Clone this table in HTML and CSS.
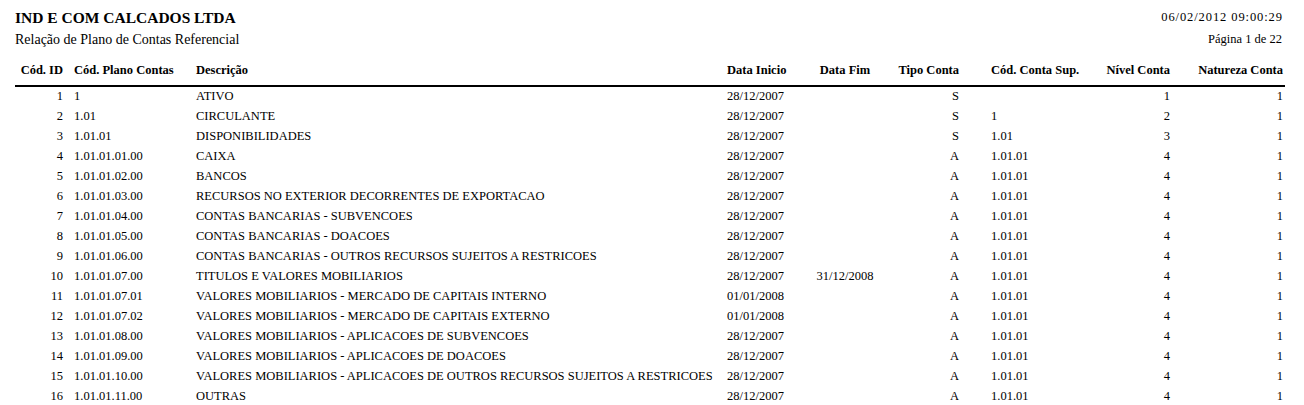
FILE: index.html
```html
<!DOCTYPE html>
<html lang="pt-BR">
<head>
<meta charset="utf-8">
<title>Relação de Plano de Contas Referencial</title>
<link rel="stylesheet" href="styles.css">
</head>
<body>
<div class="page">
  <div class="top">
    <div class="top-left">
      <div class="company">IND E COM CALCADOS LTDA</div>
      <div class="subtitle">Relação de Plano de Contas Referencial</div>
    </div>
    <div class="top-right">
      <div class="stamp">06/02/2012 09:00:29</div>
      <div class="pageno">Página 1 de 22</div>
    </div>
  </div>

  <div class="row head">
    <div class="c-id">Cód. ID</div>
    <div class="c-plano">Cód. Plano Contas</div>
    <div class="c-desc">Descrição</div>
    <div class="c-ini">Data Inicio</div>
    <div class="c-fim">Data Fim</div>
    <div class="c-tipo">Tipo Conta</div>
    <div class="c-sup">Cód. Conta Sup.</div>
    <div class="c-niv">Nível Conta</div>
    <div class="c-nat">Natureza Conta</div>
  </div>

  <div class="row"><div class="c-id">1</div><div class="c-plano">1</div><div class="c-desc">ATIVO</div><div class="c-ini">28/12/2007</div><div class="c-fim"></div><div class="c-tipo">S</div><div class="c-sup"></div><div class="c-niv">1</div><div class="c-nat">1</div></div>
  <div class="row"><div class="c-id">2</div><div class="c-plano">1.01</div><div class="c-desc">CIRCULANTE</div><div class="c-ini">28/12/2007</div><div class="c-fim"></div><div class="c-tipo">S</div><div class="c-sup">1</div><div class="c-niv">2</div><div class="c-nat">1</div></div>
  <div class="row"><div class="c-id">3</div><div class="c-plano">1.01.01</div><div class="c-desc">DISPONIBILIDADES</div><div class="c-ini">28/12/2007</div><div class="c-fim"></div><div class="c-tipo">S</div><div class="c-sup">1.01</div><div class="c-niv">3</div><div class="c-nat">1</div></div>
  <div class="row"><div class="c-id">4</div><div class="c-plano">1.01.01.01.00</div><div class="c-desc">CAIXA</div><div class="c-ini">28/12/2007</div><div class="c-fim"></div><div class="c-tipo">A</div><div class="c-sup">1.01.01</div><div class="c-niv">4</div><div class="c-nat">1</div></div>
  <div class="row"><div class="c-id">5</div><div class="c-plano">1.01.01.02.00</div><div class="c-desc">BANCOS</div><div class="c-ini">28/12/2007</div><div class="c-fim"></div><div class="c-tipo">A</div><div class="c-sup">1.01.01</div><div class="c-niv">4</div><div class="c-nat">1</div></div>
  <div class="row"><div class="c-id">6</div><div class="c-plano">1.01.01.03.00</div><div class="c-desc">RECURSOS NO EXTERIOR DECORRENTES DE EXPORTACAO</div><div class="c-ini">28/12/2007</div><div class="c-fim"></div><div class="c-tipo">A</div><div class="c-sup">1.01.01</div><div class="c-niv">4</div><div class="c-nat">1</div></div>
  <div class="row"><div class="c-id">7</div><div class="c-plano">1.01.01.04.00</div><div class="c-desc">CONTAS BANCARIAS - SUBVENCOES</div><div class="c-ini">28/12/2007</div><div class="c-fim"></div><div class="c-tipo">A</div><div class="c-sup">1.01.01</div><div class="c-niv">4</div><div class="c-nat">1</div></div>
  <div class="row"><div class="c-id">8</div><div class="c-plano">1.01.01.05.00</div><div class="c-desc">CONTAS BANCARIAS - DOACOES</div><div class="c-ini">28/12/2007</div><div class="c-fim"></div><div class="c-tipo">A</div><div class="c-sup">1.01.01</div><div class="c-niv">4</div><div class="c-nat">1</div></div>
  <div class="row"><div class="c-id">9</div><div class="c-plano">1.01.01.06.00</div><div class="c-desc">CONTAS BANCARIAS - OUTROS RECURSOS SUJEITOS A RESTRICOES</div><div class="c-ini">28/12/2007</div><div class="c-fim"></div><div class="c-tipo">A</div><div class="c-sup">1.01.01</div><div class="c-niv">4</div><div class="c-nat">1</div></div>
  <div class="row"><div class="c-id">10</div><div class="c-plano">1.01.01.07.00</div><div class="c-desc">TITULOS E VALORES MOBILIARIOS</div><div class="c-ini">28/12/2007</div><div class="c-fim">31/12/2008</div><div class="c-tipo">A</div><div class="c-sup">1.01.01</div><div class="c-niv">4</div><div class="c-nat">1</div></div>
  <div class="row"><div class="c-id">11</div><div class="c-plano">1.01.01.07.01</div><div class="c-desc">VALORES MOBILIARIOS - MERCADO DE CAPITAIS INTERNO</div><div class="c-ini">01/01/2008</div><div class="c-fim"></div><div class="c-tipo">A</div><div class="c-sup">1.01.01</div><div class="c-niv">4</div><div class="c-nat">1</div></div>
  <div class="row"><div class="c-id">12</div><div class="c-plano">1.01.01.07.02</div><div class="c-desc">VALORES MOBILIARIOS - MERCADO DE CAPITAIS EXTERNO</div><div class="c-ini">01/01/2008</div><div class="c-fim"></div><div class="c-tipo">A</div><div class="c-sup">1.01.01</div><div class="c-niv">4</div><div class="c-nat">1</div></div>
  <div class="row"><div class="c-id">13</div><div class="c-plano">1.01.01.08.00</div><div class="c-desc">VALORES MOBILIARIOS - APLICACOES DE SUBVENCOES</div><div class="c-ini">28/12/2007</div><div class="c-fim"></div><div class="c-tipo">A</div><div class="c-sup">1.01.01</div><div class="c-niv">4</div><div class="c-nat">1</div></div>
  <div class="row"><div class="c-id">14</div><div class="c-plano">1.01.01.09.00</div><div class="c-desc">VALORES MOBILIARIOS - APLICACOES DE DOACOES</div><div class="c-ini">28/12/2007</div><div class="c-fim"></div><div class="c-tipo">A</div><div class="c-sup">1.01.01</div><div class="c-niv">4</div><div class="c-nat">1</div></div>
  <div class="row"><div class="c-id">15</div><div class="c-plano">1.01.01.10.00</div><div class="c-desc">VALORES MOBILIARIOS - APLICACOES DE OUTROS RECURSOS SUJEITOS A RESTRICOES</div><div class="c-ini">28/12/2007</div><div class="c-fim"></div><div class="c-tipo">A</div><div class="c-sup">1.01.01</div><div class="c-niv">4</div><div class="c-nat">1</div></div>
  <div class="row"><div class="c-id">16</div><div class="c-plano">1.01.01.11.00</div><div class="c-desc">OUTRAS</div><div class="c-ini">28/12/2007</div><div class="c-fim"></div><div class="c-tipo">A</div><div class="c-sup">1.01.01</div><div class="c-niv">4</div><div class="c-nat">1</div></div>
</div>
</body>
</html>
```

FILE: styles.css
```css
html, body {
  margin: 0;
  padding: 0;
  background: #ffffff;
  overflow: hidden;
}

body {
  font-family: "Liberation Serif", "Times New Roman", serif;
  color: #000000;
}

.page {
  padding: 9px 0 0 15px;
  width: 1270px;
}

.top {
  display: flex;
  justify-content: space-between;
  padding-right: 3px;
}

.company {
  font-size: 15.5px;
  font-weight: bold;
  line-height: 18px;
  height: 18px;
}

.subtitle {
  font-size: 14px;
  line-height: 17px;
  height: 17px;
  margin-top: 4px;
}

.top-right {
  display: flex;
  flex-direction: column;
  align-items: flex-end;
  gap: 8px;
  padding-top: 1px;
}

.stamp,
.pageno {
  font-size: 12.5px;
  line-height: 14px;
  height: 14px;
  white-space: nowrap;
}

.stamp {
  letter-spacing: 0.9px;
  margin-right: -0.9px;
}

.row {
  display: grid;
  grid-template-columns: 48px 133px 531px 73px 90px 69px 131px 80px 113px;
  height: 20px;
  line-height: 18px;
  font-size: 12.5px;
  white-space: nowrap;
}

.row.head {
  margin-top: 12px;
  line-height: 20px;
  font-size: 12.5px;
  font-weight: bold;
  padding-bottom: 5px;
  border-bottom: 2px solid #000000;
  width: 1270px;
  height: 20px;
  box-sizing: content-box;
}

.c-id { text-align: right; }
.c-plano { padding-left: 11px; }
.c-fim { text-align: center; }
.c-tipo { text-align: right; }
.c-sup { padding-left: 32px; }
.c-niv { text-align: right; }
.c-nat { text-align: right; }
```
